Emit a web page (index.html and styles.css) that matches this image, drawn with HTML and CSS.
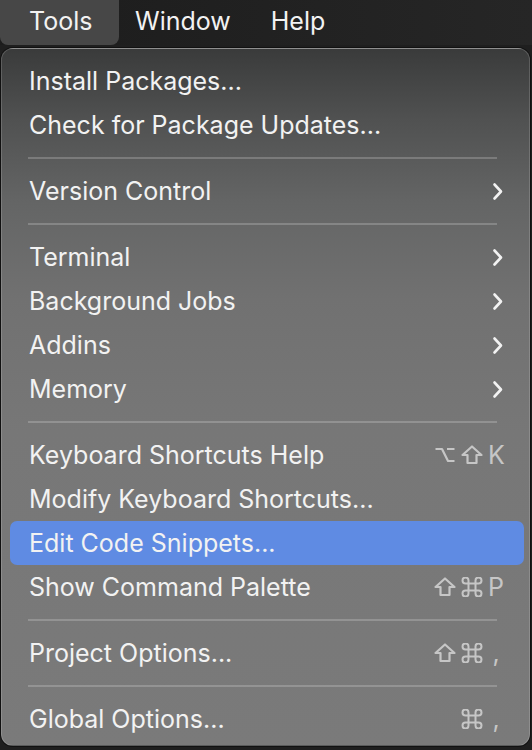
FILE: index.html
```html
<!DOCTYPE html>
<html>
<head>
<meta charset="utf-8">
<link rel="stylesheet" href="styles.css">
</head>
<body>
<div class="menubar">
  <div class="bar-item active">Tools</div>
  <div class="bar-item window">Window</div>
  <div class="bar-item help">Help</div>
</div>
<div class="menu">
  <div class="row"><span class="label">Install Packages...</span></div>
  <div class="row"><span class="label">Check for Package Updates...</span></div>
  <div class="sep"></div>
  <div class="row"><span class="label">Version Control</span><svg class="chev" viewBox="0 0 11 19"><path d="M2.5 2.5 L9 9.5 L2.5 16.5"/></svg></div>
  <div class="sep"></div>
  <div class="row"><span class="label">Terminal</span><svg class="chev" viewBox="0 0 11 19"><path d="M2.5 2.5 L9 9.5 L2.5 16.5"/></svg></div>
  <div class="row"><span class="label">Background Jobs</span><svg class="chev" viewBox="0 0 11 19"><path d="M2.5 2.5 L9 9.5 L2.5 16.5"/></svg></div>
  <div class="row"><span class="label">Addins</span><svg class="chev" viewBox="0 0 11 19"><path d="M2.5 2.5 L9 9.5 L2.5 16.5"/></svg></div>
  <div class="row"><span class="label">Memory</span><svg class="chev" viewBox="0 0 11 19"><path d="M2.5 2.5 L9 9.5 L2.5 16.5"/></svg></div>
  <div class="sep"></div>
  <div class="row"><span class="label">Keyboard Shortcuts Help</span>
    <span class="keys">
      <svg class="sym" viewBox="0 0 22 20"><path d="M1.5 4 H8 L14 16 H20.5 M13 4 H20.5"/></svg>
      <svg class="sym" viewBox="0 0 22 20"><path d="M11 1.5 L20.5 10 H15.5 V18 H6.5 V10 H1.5 Z"/></svg>
      <span class="k">K</span>
    </span>
  </div>
  <div class="row"><span class="label">Modify Keyboard Shortcuts...</span></div>
  <div class="row selected"><span class="label">Edit Code Snippets...</span></div>
  <div class="row"><span class="label">Show Command Palette</span>
    <span class="keys">
      <svg class="sym" viewBox="0 0 22 20"><path d="M11 1.5 L20.5 10 H15.5 V18 H6.5 V10 H1.5 Z"/></svg>
      <svg class="sym cmd" viewBox="0 0 22 20"><path d="M7.5 6.5 V3.5 A3 3 0 1 0 4.5 6.5 H17.5 A3 3 0 1 0 14.5 3.5 V16.5 A3 3 0 1 0 17.5 13.5 H4.5 A3 3 0 1 0 7.5 16.5 Z"/></svg>
      <span class="k">P</span>
    </span>
  </div>
  <div class="sep"></div>
  <div class="row"><span class="label">Project Options...</span>
    <span class="keys">
      <svg class="sym" viewBox="0 0 22 20"><path d="M11 1.5 L20.5 10 H15.5 V18 H6.5 V10 H1.5 Z"/></svg>
      <svg class="sym cmd" viewBox="0 0 22 20"><path d="M7.5 6.5 V3.5 A3 3 0 1 0 4.5 6.5 H17.5 A3 3 0 1 0 14.5 3.5 V16.5 A3 3 0 1 0 17.5 13.5 H4.5 A3 3 0 1 0 7.5 16.5 Z"/></svg>
      <span class="k">,</span>
    </span>
  </div>
  <div class="sep"></div>
  <div class="row"><span class="label">Global Options...</span>
    <span class="keys">
      <svg class="sym cmd" viewBox="0 0 22 20"><path d="M7.5 6.5 V3.5 A3 3 0 1 0 4.5 6.5 H17.5 A3 3 0 1 0 14.5 3.5 V16.5 A3 3 0 1 0 17.5 13.5 H4.5 A3 3 0 1 0 7.5 16.5 Z"/></svg>
      <span class="k">,</span>
    </span>
  </div>
</div>
</body>
</html>
```
FILE: styles.css
```css
html, body {
  margin: 0;
  padding: 0;
}
body {
  width: 532px;
  height: 750px;
  overflow: hidden;
  background: #1f1f1f;
  font-family: Inter, "Liberation Sans", sans-serif;
  color: #f2f2f2;
}
.menubar {
  height: 45px;
  display: flex;
  align-items: center;
  background: linear-gradient(90deg, #1c1c1c 0%, #222222 60%, #262626 100%);
  font-size: 25px;
}
.bar-item {
  height: 45px;
  display: flex;
  align-items: center;
  box-sizing: border-box;
  padding-bottom: 4px;
}
.bar-item.active {
  width: 119px;
  padding-left: 29px;
  background: #474747;
  border-radius: 0 0 8px 8px;
}
.bar-item.window {
  margin-left: 16px;
}
.bar-item.help {
  margin-left: 40px;
}
.menu {
  margin: 3px 2px 0 1px;
  height: 698px;
  box-sizing: border-box;
  border: 1px solid rgba(255, 255, 255, 0.16);
  box-shadow: 0 0 0 1px #111;
  border-radius: 12px;
  padding: 10px 0 5px;
  background: linear-gradient(180deg, #3a3b3b 0%, #505151 10%, #646565 22%, #717171 36%, #777777 55%, #7a7a7a 100%);
  font-size: 25px;
}
.row {
  height: 44px;
  display: flex;
  align-items: center;
  margin: 0 5px 0 8px;
  padding: 0 20px 0 19px;
  border-radius: 7px;
}
.row.selected {
  background: #5f8be3;
}
.label {
  flex: 1;
  white-space: nowrap;
}
.chev {
  width: 11px;
  height: 19px;
  margin-right: 1px;
  fill: none;
  stroke: #f2f2f2;
  stroke-width: 2.6;
  stroke-linecap: round;
  stroke-linejoin: round;
}
.keys {
  display: flex;
  align-items: center;
  gap: 5px;
  color: #c6c6c6;
  font-size: 25px;
}
.sym {
  width: 22px;
  height: 20px;
  fill: none;
  stroke: #c6c6c6;
  stroke-width: 2.2;
  stroke-linejoin: round;
  stroke-linecap: butt;
}
.sym.cmd {
  stroke-width: 2;
}
.k {
  width: 16px;
  text-align: center;
}
.sep {
  height: 2px;
  margin: 10px 32px 10px 26px;
  background: rgba(255, 255, 255, 0.2);
}
```
